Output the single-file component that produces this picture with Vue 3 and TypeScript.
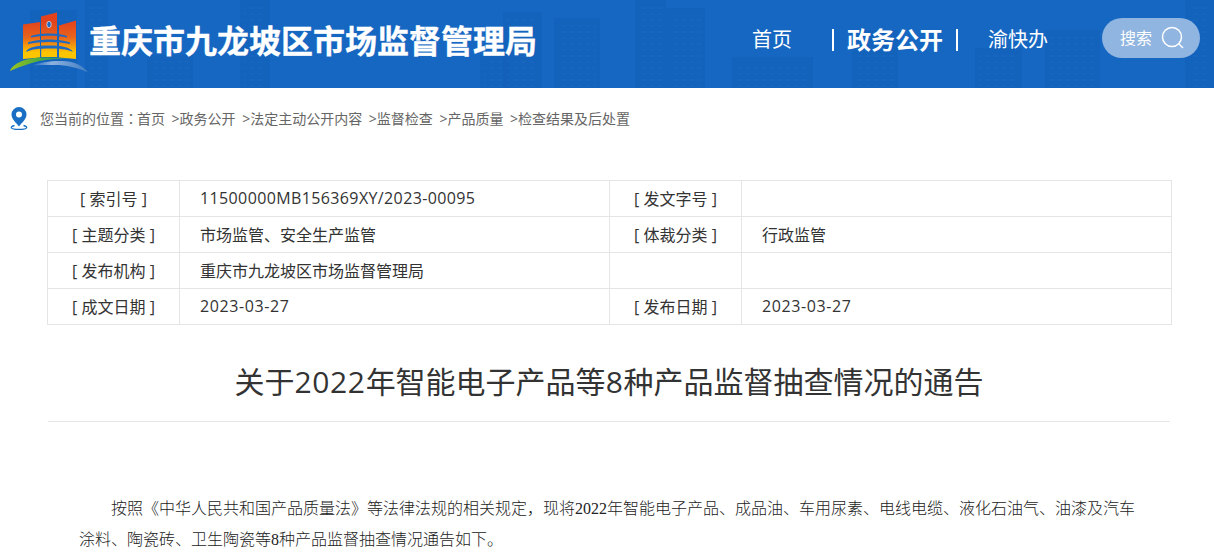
<script setup lang="ts">
const crumbs = ['政务公开', '法定主动公开内容', '监督检查', '产品质量', '检查结果及后处置']
const towers = [
  { x: 30, y: 10, w: 47 },
  { x: 85, y: 0, w: 23 },
  { x: 147, y: 55, w: 46 },
  { x: 240, y: 0, w: 30 },
  { x: 480, y: 55, w: 30 },
  { x: 503, y: 12, w: 39 },
  { x: 554, y: 18, w: 46 },
  { x: 635, y: 0, w: 31 },
  { x: 666, y: 8, w: 39 },
  { x: 732, y: 57, w: 81 },
  { x: 852, y: 30, w: 46 },
  { x: 975, y: 48, w: 47 },
  { x: 1045, y: 30, w: 55 },
  { x: 1185, y: 0, w: 29 },
]
</script>

<template>
  <div class="page">
    <header class="head">
      <svg class="skyline" width="1214" height="88" viewBox="0 0 1214 88" aria-hidden="true">
        <defs>
          <pattern id="windows" width="8" height="6" patternUnits="userSpaceOnUse">
            <rect x="1" y="1" width="5" height="2" fill="#2a78cc" opacity="0.14" />
          </pattern>
        </defs>
        <g v-for="t in towers" :key="t.x">
          <rect :x="t.x" :y="t.y" :width="t.w" :height="88 - t.y" fill="#125fb8" opacity="0.55" />
          <rect :x="t.x + 4" :y="t.y + 6" :width="t.w - 8" :height="88 - t.y - 6" fill="url(#windows)" />
        </g>
      </svg>
      <div class="brand">
        <svg class="logo" width="82" height="62" viewBox="0 0 82 62" aria-hidden="true">
          <defs>
            <linearGradient id="fill" gradientUnits="userSpaceOnUse" x1="0" y1="0" x2="0" y2="46">
              <stop offset="0.2" stop-color="#e2421c" />
              <stop offset="0.55" stop-color="#e8641c" />
              <stop offset="0.88" stop-color="#fdc400" />
            </linearGradient>
            <linearGradient id="arc" x1="0" y1="0" x2="1" y2="0">
              <stop offset="0" stop-color="#9cc31f" />
              <stop offset="0.5" stop-color="#45a845" />
              <stop offset="1" stop-color="#2f8f7a" />
            </linearGradient>
            <linearGradient id="arc2" x1="0" y1="0" x2="1" y2="0">
              <stop offset="0" stop-color="#1e69c2" />
              <stop offset="0.35" stop-color="#8fb3de" />
              <stop offset="1" stop-color="#3f7cc4" />
            </linearGradient>
          </defs>
          <path d="M14 12.500 31 10v35.500l-17 1.500Z" fill="url(#fill)" />
          <path d="M32 4.500 48 .5V45H32Z" fill="url(#fill)" />
          <path d="M50 13.500 67 8.500V47l-17-1.500Z" fill="url(#fill)" />
          <ellipse cx="40" cy="12.500" rx="2.200" ry="3.200" fill="#1e69c2" stroke="#fff" stroke-opacity="0.8" stroke-width="0.800" />
          <g fill="#1e69c2">
            <path d="M22 24c8-3.500 28-3.500 36 0v1.500c-9-2.500-27-2.500-36 0Z" />
            <path d="M19 30.500c10-4 32-4 42 0v1.500c-11-2.800-31-2.800-42 0Z" />
            <path d="M17 40c2-5 10-6.500 23-6.500s21 1.500 24 6.500c-6-3-14-3.500-24-3.500S23 37 17 40Z" />
            <rect x="31" y="36" width="1.200" height="10" />
            <rect x="48.500" y="36" width="1.200" height="10" />
          </g>
          <path d="M1 59C3 52 17 45 36 45.500c10 .2 20 .5 27 1.500-14-.5-28 0-42 4.500-8 2.500-15 5-20 7.500Z" fill="url(#arc)" />
          <path d="M23 53.500C32 49.500 52 47.500 62 50c8 2 14 6 17 10.500-10-5-22-7.500-33-7.500-8 0-16 0-23 .5Z" fill="url(#arc2)" />
        </svg>
        <h1 class="org">重庆市九龙坡区市场监督管理局</h1>
      </div>
      <nav class="nav">
        <a class="nav-item home">首页</a>
        <span class="bar bar-l"></span>
        <a class="nav-item active">政务公开</a>
        <span class="bar bar-r"></span>
        <a class="nav-item yu">渝快办</a>
      </nav>
      <div class="search">
        <span class="search-label">搜索</span>
        <svg width="24" height="24" viewBox="0 0 24 24" fill="none" stroke="#fff" stroke-width="1.500" aria-hidden="true">
          <circle cx="11" cy="11" r="9.500" />
          <path d="m18 18 4 4" />
        </svg>
      </div>
    </header>

    <div class="crumbs">
      <svg class="pin" width="18" height="24" viewBox="0 0 18 24" aria-hidden="true">
        <path d="M9 1a7.500 7.500 0 0 0-7.500 7.500C1.500 13 6 16.500 9 20.500c3-4 7.500-7.500 7.500-12A7.500 7.500 0 0 0 9 1Zm0 4.500a3 3 0 1 1 0 6 3 3 0 0 1 0-6Z" fill="#1a6fc4" />
        <path d="M4.500 19.500C2 20 1 21 1.500 22s3.500 1.500 7.500 1.500 7-.5 7.500-1.500-.5-2-3-2.500" fill="none" stroke="#1a6fc4" stroke-width="1.300" />
      </svg>
      <span class="crumb-text">您当前的位置<span class="colon">：</span>首页<template v-for="c in crumbs" :key="c"><span class="sep">&gt;</span>{{ c }}</template></span>
    </div>

    <table class="meta">
      <colgroup>
        <col class="c1" /><col class="c2" /><col class="c3" /><col class="c4" />
      </colgroup>
      <tbody>
        <tr>
          <td class="label">[ 索引号 ]</td>
          <td class="val"><span class="id">11500000MB156369XY/2023-00095</span></td>
          <td class="label">[ 发文字号 ]</td>
          <td class="val"></td>
        </tr>
        <tr>
          <td class="label">[ 主题分类 ]</td>
          <td class="val">市场监管、安全生产监管</td>
          <td class="label">[ 体裁分类 ]</td>
          <td class="val">行政监管</td>
        </tr>
        <tr>
          <td class="label">[ 发布机构 ]</td>
          <td class="val">重庆市九龙坡区市场监督管理局</td>
          <td class="label"></td>
          <td class="val"></td>
        </tr>
        <tr>
          <td class="label">[ 成文日期 ]</td>
          <td class="val"><span class="date">2023-03-27</span></td>
          <td class="label">[ 发布日期 ]</td>
          <td class="val"><span class="date">2023-03-27</span></td>
        </tr>
      </tbody>
    </table>

    <h2 class="title">关于<span class="num">2022</span>年智能电子产品等<span class="num">8</span>种产品监督抽查情况的通告</h2>

    <p class="body">按照《中华人民共和国产品质量法》等法律法规的相关规定，现将2022年智能电子产品、成品油、车用尿素、电线电缆、液化石油气、油漆及汽车涂料、陶瓷砖、卫生陶瓷等8种产品监督抽查情况通告如下。</p>
  </div>
</template>

<style>
html, body { margin: 0; background: #fff; overflow: hidden; }
</style>

<style scoped>
.page {
  width: 1214px;
  height: 556px;
  overflow: hidden;
  font-family: "Open Sans", "Noto Sans CJK SC", sans-serif;
  color: #333;
}
.head {
  position: relative;
  height: 88px;
  box-sizing: border-box;
  padding-bottom: 8px;
  background: #1667c2;
  display: flex;
  align-items: center;
  color: #fff;
}
.skyline { position: absolute; left: 0; top: 0; }
.brand {
  position: relative;
  display: flex;
  align-items: center;
  margin-left: 9px;
  width: 711px;
}
.logo { margin-top: 5px; flex: none; }
.org {
  margin: 1px 0 0 -2px;
  font-size: 32px;
  font-weight: 700;
  line-height: 40px;
  white-space: nowrap;
  -webkit-text-stroke: 0.3px #fff;
}
.nav {
  position: relative;
  display: flex;
  align-items: center;
  width: 382px;
  height: 40px;
}
.nav-item { white-space: nowrap; margin-bottom: 4px; }
.home { font-size: 20px; margin-left: 32px; }
.bar { width: 2px; height: 22px; background: #fff; }
.bar-l { margin-left: 40px; }
.active { font-size: 24px; font-weight: 700; margin-left: 13px; }
.bar-r { margin-left: 13px; }
.yu { font-size: 20px; margin-left: 30px; }
.search {
  position: relative;
  width: 98px;
  height: 40px;
  margin-top: -4px;
  box-sizing: border-box;
  padding: 0 15px 0 18px;
  border-radius: 20px;
  background: #8fb5e0;
  display: flex;
  align-items: center;
  justify-content: space-between;
  font-size: 16px;
}
.search-label { margin-bottom: 2px; }
.crumbs {
  display: flex;
  align-items: center;
  height: 24px;
  margin-top: 18px;
  padding-left: 10px;
}
.crumb-text {
  margin-left: 12px;
  font-size: 14px;
  color: #666;
  white-space: nowrap;
}
.colon { font-family: "Noto Sans CJK TC", sans-serif; margin-right: -1px; }
.sep { margin-left: 6.600px; }
.meta {
  width: 1125px;
  margin: 50px 0 0 47px;
  border-collapse: collapse;
  table-layout: fixed;
  font-size: 16px;
}
.c1 { width: 132px; }
.c2 { width: 430px; }
.c3 { width: 132px; }
.meta td {
  height: 36px;
  padding: 0 0 1px;
  border: 1px solid #e5e5e5;
  box-sizing: border-box;
  white-space: nowrap;
}
.label { text-align: center; }
.meta .val { padding-left: 20px; }
.id { letter-spacing: 0.380px; }
.date { letter-spacing: 0.600px; }
.title {
  margin: 33px 44px 0 48px;
  height: 63px;
  border-bottom: 1px solid #e5e5e5;
  font-size: 30px;
  font-weight: 400;
  line-height: 48px;
  text-align: center;
  white-space: nowrap;
}
.num { letter-spacing: 0.600px; }
.body {
  margin: 71px 79px 0 79px;
  font-family: "Liberation Serif", "Noto Sans CJK SC", serif;
  font-size: 16px;
  font-weight: 300;
  line-height: 31px;
  text-indent: 2em;
  color: #222;
}
</style>
